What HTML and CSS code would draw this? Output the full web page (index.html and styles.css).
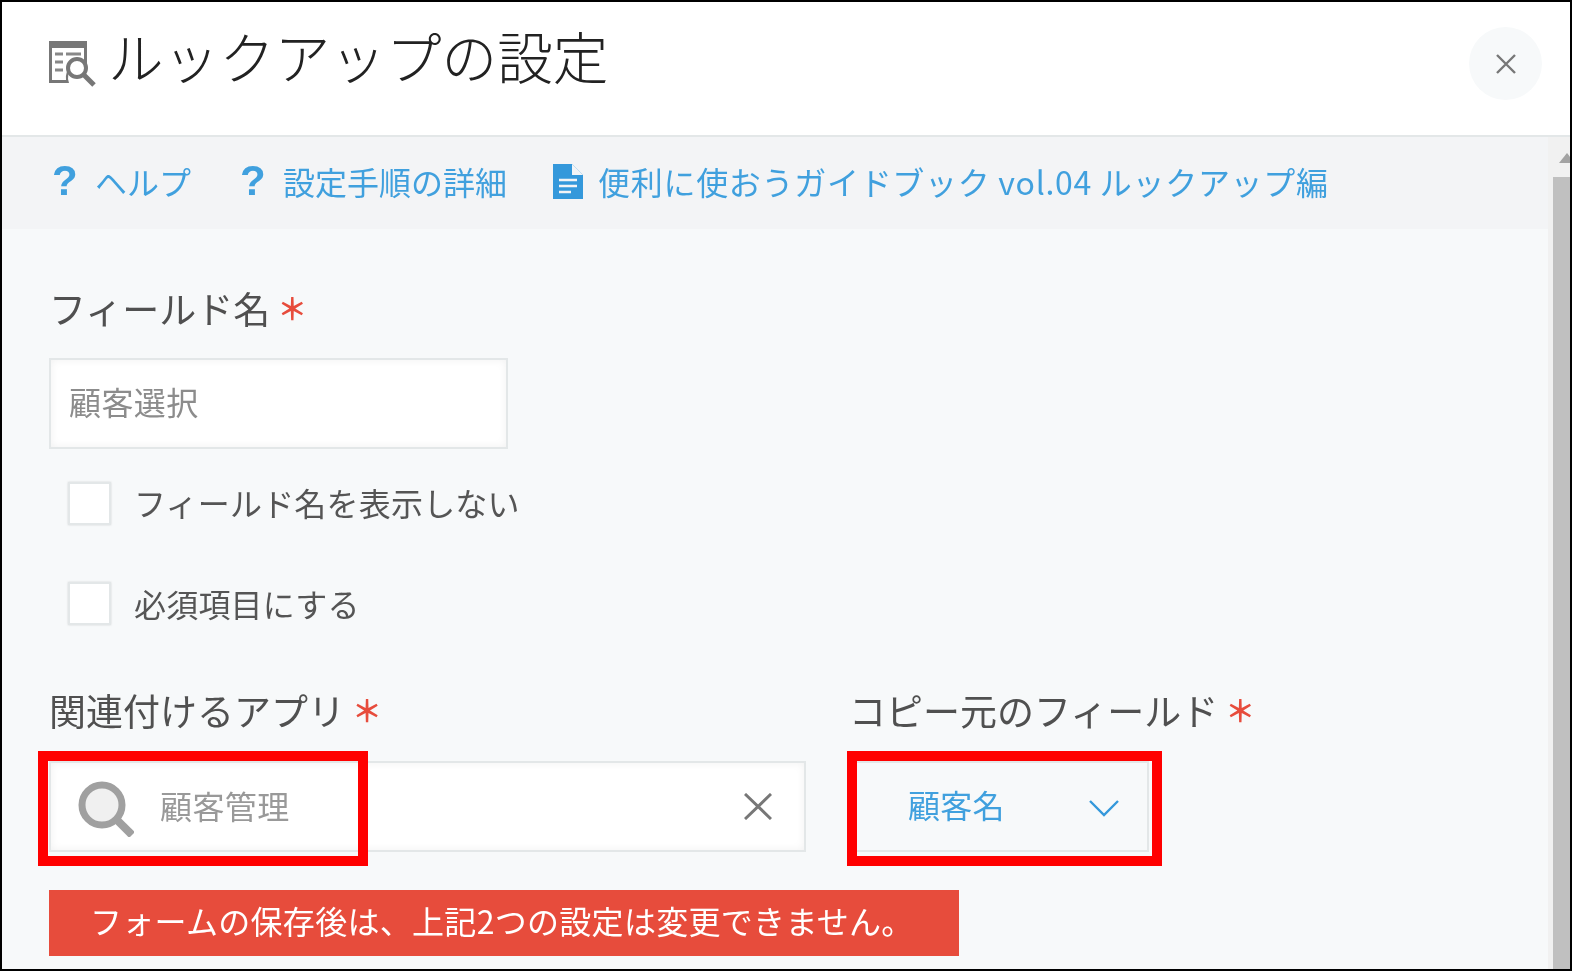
FILE: index.html
```html
<!DOCTYPE html>
<html lang="ja">
<head>
<meta charset="utf-8">
<title>ルックアップの設定</title>
<link rel="stylesheet" href="styles.css">
</head>
<body>
<div class="frame">
  <header class="head soft">
    <svg class="title-icon" viewBox="0 0 47 46">
      <path fill="#777" d="M0 0h38v24a14 14 0 0 0-18 18H0z"/>
      <path fill="#fff" d="M3 7h32v15a15 15 0 0 0-18 17H3z"/>
      <path stroke="#888" stroke-width="3" d="M6 13h8M6 21h8M6 29h8M17 13h15"/>
      <circle cx="28" cy="27" r="9" fill="#fff" stroke="#777" stroke-width="4"/>
      <path stroke="#777" stroke-width="5" d="M34 33l11 11"/>
    </svg>
    <h1 class="title">ルックアップの設定</h1>
    <button class="close" type="button" aria-label="閉じる">
      <svg viewBox="0 0 20 20"><path fill="none" stroke="#777" stroke-width="2.4" d="M1 1l18 18M19 1L1 19"/></svg>
    </button>
  </header>
  <div class="body">
    <div class="main">
      <nav class="links soft">
        <a class="link"><span class="q">?</span>ヘルプ</a>
        <a class="link"><span class="q">?</span>設定手順の詳細</a>
        <a class="link link-guide"><svg class="doc" viewBox="0 0 30 35">
            <path fill="#3498db" d="M0 0h19l11 11v24H0z"/>
            <path fill="#f3f4f6" d="M19 0v11h11z"/>
            <path stroke="#f3f4f6" stroke-width="2.4" d="M6 16h18M6 22h18M6 28h12"/>
          </svg><span>便利に使おうガイドブック vol.04 ルックアップ編</span></a>
      </nav>
      <form class="form soft">
        <label class="label first">フィールド名<span class="req">＊</span></label>
        <div class="input name-input">顧客選択</div>
        <div class="check first-check"><span class="box"></span><span class="check-text">フィールド名を表示しない</span></div>
        <div class="check second-check"><span class="box"></span><span class="check-text">必須項目にする</span></div>
        <div class="row">
          <div class="col col-app">
            <label class="label">関連付けるアプリ<span class="req">＊</span></label>
            <div class="input search">
              <svg class="search-icon" viewBox="0 0 56 56">
                <circle cx="24" cy="24" r="20" fill="#f0f0f0" stroke="#a0a0a0" stroke-width="7"/>
                <path stroke="#a0a0a0" stroke-width="8" d="M38 38l16 16"/>
              </svg>
              <span class="search-text">顧客管理</span>
              <svg class="clear" viewBox="0 0 28 27"><path fill="none" stroke="#777" stroke-width="3" d="M1 1l26 25M27 1L1 26"/></svg>
            </div>
          </div>
          <div class="col col-copy">
            <label class="label label-copy">コピー元のフィールド<span class="req">＊</span></label>
            <div class="select">
              <span class="select-text">顧客名</span>
              <svg class="chev" viewBox="0 0 30 17"><path fill="none" stroke="#3498db" stroke-width="2.4" d="M1 1l14 14L29 1"/></svg>
            </div>
          </div>
        </div>
        <div class="alert">フォームの保存後は、上記2つの設定は変更できません。</div>
      </form>
    </div>
    <div class="scrollbar">
      <span class="arrow"></span>
      <span class="thumb"></span>
    </div>
  </div>
  <span class="mark mark-app"></span>
  <span class="mark mark-copy"></span>
</div>
</body>
</html>
```
FILE: styles.css
```css
* { box-sizing: border-box; }
html, body { margin: 0; padding: 0; background: #000; }
body { font-family: "Noto Sans CJK JP", "Noto Sans", sans-serif; }
.frame {
  position: relative;
  width: 1572px;
  height: 971px;
  border: 2px solid #000;
  display: flex;
  flex-direction: column;
  overflow: hidden;
  background: #fff;
}
.soft { filter: blur(0.55px); }
.head {
  flex: none;
  height: 135px;
  padding-left: 47px;
  display: flex;
  align-items: flex-start;
  background: #fff;
  border-bottom: 2px solid #e3e7e8;
}
.title-icon { width: 47px; height: 46px; margin-top: 39px; }
.title {
  margin: 13px 0 0 12px;
  font-size: 55.6px;
  line-height: 80px;
  font-weight: 300;
  color: #222;
}
.close {
  margin: 25px 28px 0 auto;
  width: 73px;
  height: 73px;
  border: 0;
  border-radius: 50%;
  background: #f7f9fa;
  display: flex;
  align-items: center;
  justify-content: center;
  padding: 0;
}
.close svg { width: 20px; height: 20px; }
.body { flex: 1; display: flex; min-height: 0; }
.main { flex: 1; display: flex; flex-direction: column; min-width: 0; background: #f7f9fa; }
.links {
  flex: none;
  height: 92px;
  background: #f3f4f6;
  display: flex;
  align-items: center;
  gap: 49px;
  padding-left: 50px;
  padding-bottom: 4px;
  font-size: 32px;
  color: #40a0de;
}
.link { display: flex; align-items: center; white-space: nowrap; }
.q {
  font-family: "Liberation Sans", sans-serif;
  font-size: 42px;
  line-height: 1;
  font-weight: 700;
  width: 43px;
}
.doc { width: 30px; height: 35px; margin-right: 15px; }
.link-guide { letter-spacing: 0.7px; margin-left: -3px; }
.form { flex: 1; padding-left: 47px; color: #333; }
.label {
  display: block;
  height: 48px;
  line-height: 44px;
  font-size: 37px;
  font-weight: 400;
  color: #505050;
  white-space: nowrap;
}
.label.first { margin-top: 57px; }
.label-copy { margin-left: -3px; }
.req {
  position: relative;
  top: -4px;
  color: #e74c3c;
  margin-left: 7px;
  font-size: 30px;
  font-weight: 700;
}
.input {
  background: #fff;
  border: 2px solid #e3e7e8;
  box-shadow: inset 0 0 8px rgba(0, 0, 0, 0.06);
  font-size: 32px;
  color: #8c8c8c;
  letter-spacing: 0.4px;
}
.name-input {
  width: 459px;
  height: 91px;
  margin-top: 24px;
  padding-left: 18px;
  line-height: 82px;
}
.check {
  display: flex;
  align-items: center;
  height: 43px;
  padding-left: 19px;
  font-size: 32px;
  color: #555;
  white-space: nowrap;
}
.check-text { position: relative; top: -2px; letter-spacing: 0.2px; }
.first-check { margin-top: 33px; }
.second-check { margin-top: 57px; }
.second-check .check-text { top: -1px; }
.box {
  width: 43px;
  height: 43px;
  margin-right: 23px;
  background: #fff;
  border: 2px solid #e3e7e8;
  box-shadow: 0 0 2px rgba(0, 0, 0, 0.15);
}
.row { display: flex; gap: 46px; margin-top: 63px; }
.col-app { width: 757px; }
.col-copy { width: 297px; }
.row .input, .select { height: 91px; margin-top: 25px; }
.search {
  display: flex;
  align-items: center;
  padding-left: 27px;
  padding-right: 32px;
}
.search-icon { width: 56px; height: 56px; margin-top: 4px; }
.search-text { margin-left: 26px; margin-bottom: 4px; color: #999; }
.clear { width: 28px; height: 27px; margin-left: auto; }
.select {
  display: flex;
  align-items: center;
  padding-left: 54px;
  padding-right: 28px;
  border: 2px solid #e3e7e8;
  font-size: 32px;
  color: #40a0de;
}
.select-text { margin-bottom: 5px; letter-spacing: 0.3px; }
.chev { width: 30px; height: 17px; margin-left: auto; margin-top: 4px; }
.alert {
  width: 910px;
  height: 66px;
  margin-top: 38px;
  padding-left: 41px;
  background: #e74c3c;
  color: #fff;
  font-size: 32px;
  line-height: 60px;
  letter-spacing: 0.3px;
  white-space: nowrap;
}
.scrollbar {
  flex: none;
  width: 22px;
  background: #f1f1f1;
  display: flex;
  flex-direction: column;
  align-items: flex-end;
}
.arrow {
  width: 0;
  height: 0;
  margin-top: 16px;
  margin-right: -5px;
  border-left: 8px solid transparent;
  border-right: 8px solid transparent;
  border-bottom: 10px solid #a3a3a3;
}
.thumb { width: 17px; flex: 1; margin-top: 14px; background: #c0c0c0; }
.mark { position: absolute; top: 749px; height: 115px; border: 10px solid #f00; }
.mark-app { left: 36px; width: 330px; }
.mark-copy { left: 845px; width: 315px; }
```
